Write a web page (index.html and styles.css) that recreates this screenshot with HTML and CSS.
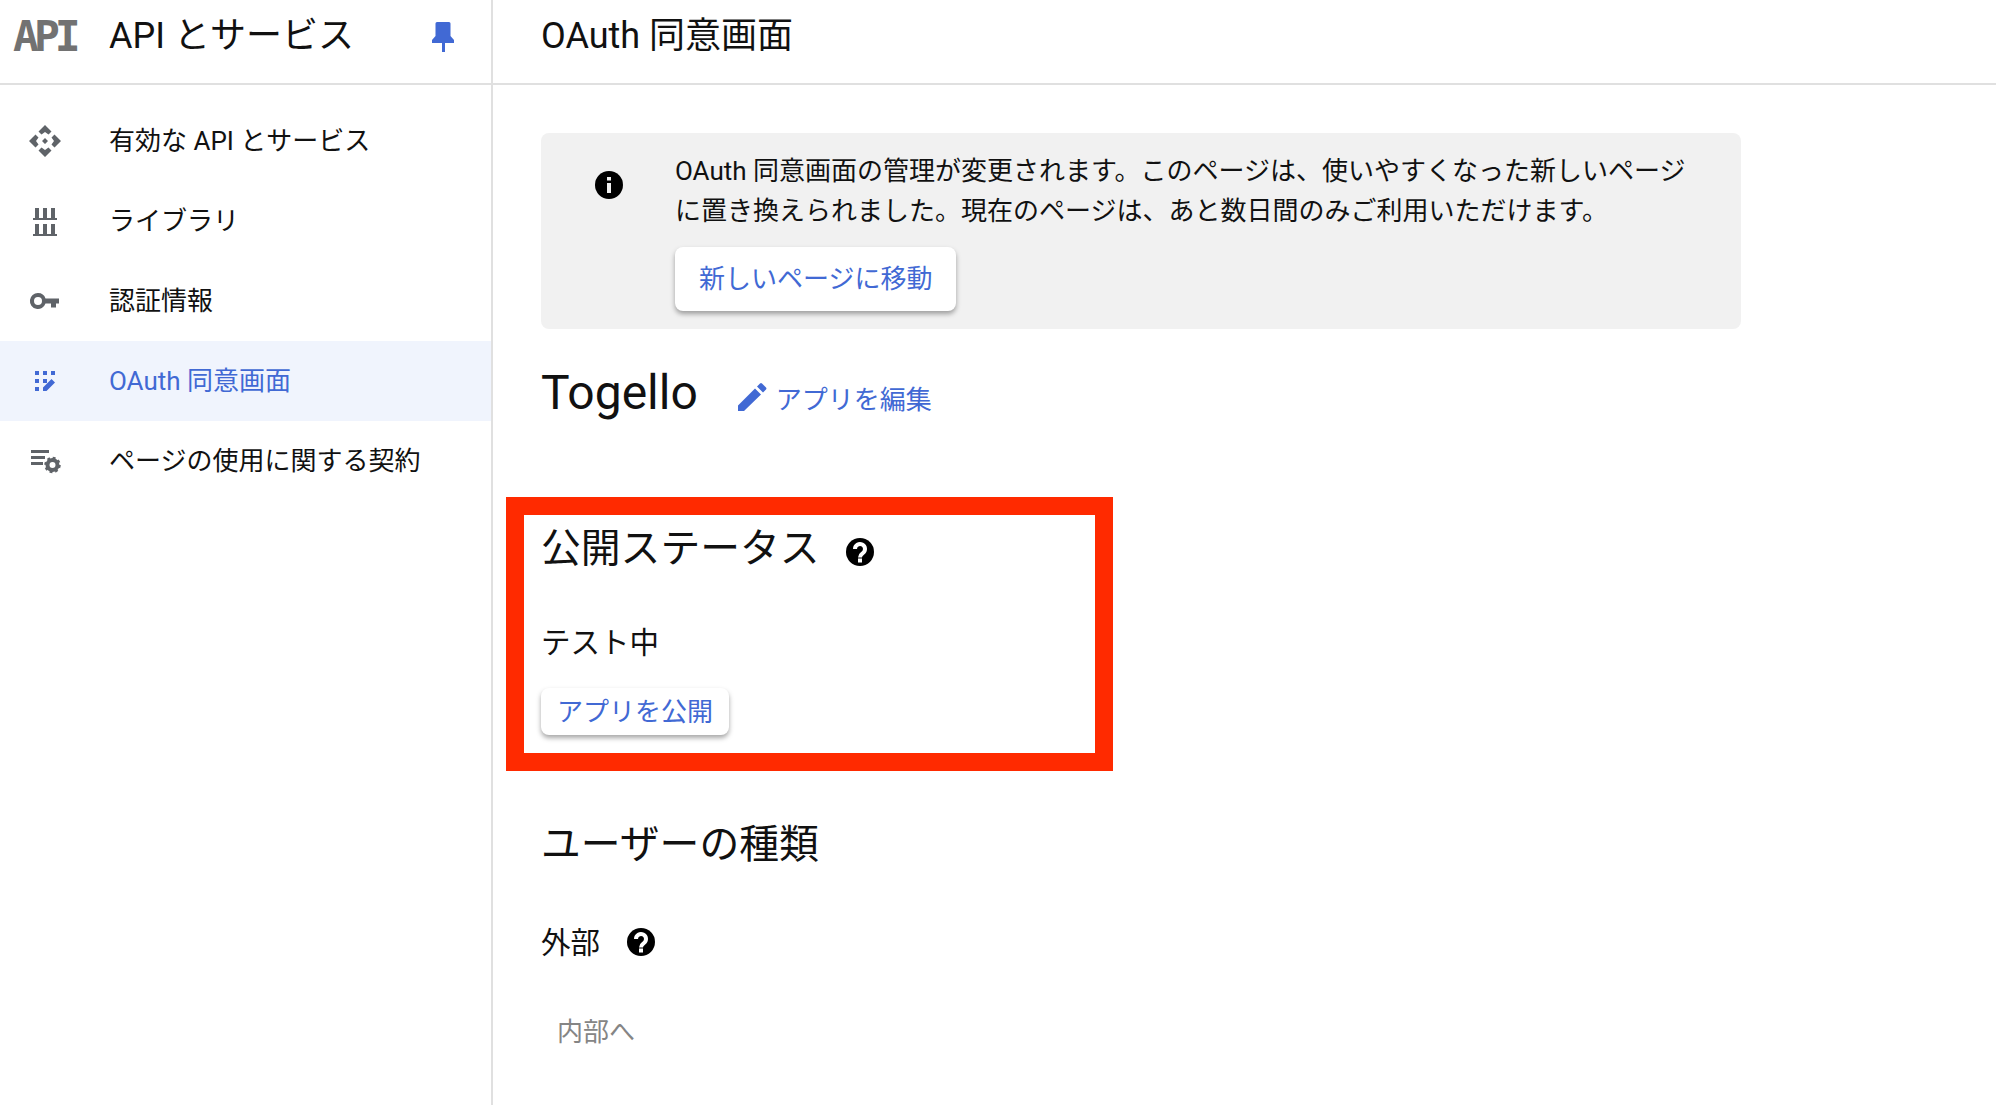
FILE: index.html
```html
<!DOCTYPE html>
<html lang="ja">
    <head>
        <meta charset="UTF-8" />
        <title>OAuth 同意画面</title>
        <link rel="stylesheet" href="styles.css">
    </head>
    <body>
        <div class="page">
            <aside class="sidebar">
                <div class="side-head">
                    <span class="api-logo">API</span>
                    <span class="side-title">API とサービス</span>
                    <svg class="pin" viewBox="0 0 22 30"><path d="M5 0h12q1.500 0 1.500 1.500V14l3.500 4v3h-9v9h-3v-9H0v-3l3.500-4V1.500Q3.500 0 5 0z"/></svg>
                </div>
                <nav class="nav">
                    <a class="nav-item">
                        <svg class="nav-icon" viewBox="0 0 32 32"><path d="M16 0l6.500 6.500-3 3L16 7l-3.500 2.500-3-3zM32 16l-6.500 6.500-3-3L25 16l-2.500-3.500 3-3zM16 32l-6.500-6.500 3-3L16 25l3.500-2.500 3 3zM0 16l6.500-6.500 3 3L7 16l2.500 3.500-3 3zM16 13l3 3-3 3-3-3z"/></svg>
                        <span class="nav-label">有効な API とサービス</span>
                    </a>
                    <a class="nav-item">
                        <svg class="nav-icon" viewBox="0 0 32 32"><path d="M6 3h4v10H6zM14 3h4v10h-4zM22 3h4v10h-4zM4 13h24v2H4zM6 19h4v10H6zM14 19h4v10h-4zM22 19h4v10h-4zM4 29h24v2H4z"/></svg>
                        <span class="nav-label">ライブラリ</span>
                    </a>
                    <a class="nav-item">
                        <svg class="nav-icon" viewBox="0 0 32 32"><path fill-rule="evenodd" d="M9 8a8 8 0 0 1 7.500 5.500H30v5h-3v4h-5v-4h-5.500A8 8 0 1 1 9 8zm0 4a4 4 0 1 0 0 8 4 4 0 0 0 0-8z"/></svg>
                        <span class="nav-label">認証情報</span>
                    </a>
                    <a class="nav-item active">
                        <svg class="nav-icon" viewBox="0 0 32 32"><path d="M6 6h4v4H6zM14 6h4v4h-4zM22 6h4v4h-4zM6 14h4v4H6zM14 14h4v4h-4zM6 22h4v4H6zM14 26v-3.500L22.500 14l3.500 3.500-8.500 8.500z"/></svg>
                        <span class="nav-label">OAuth 同意画面</span>
                    </a>
                    <a class="nav-item">
                        <svg class="nav-icon" viewBox="0 0 32 32">
                            <path d="M2 5h18v3H2zM2 11h14v3H2zM2 17h12v3H2z"/>
                            <circle class="gear" cx="23.500" cy="20" r="5" stroke-width="4"/>
                            <circle class="gear" cx="23.500" cy="20" r="7" stroke-width="2.500" stroke-dasharray="2.750 2.750"/>
                        </svg>
                        <span class="nav-label">ページの使用に関する契約</span>
                    </a>
                </nav>
            </aside>
            <div class="content">
                <header class="content-head">OAuth 同意画面</header>
                <main class="main">
                    <section class="banner">
                        <svg class="round-icon banner-icon" viewBox="0 0 28 28"><circle cx="14" cy="14" r="14"/><path fill="#f1f1f1" d="M12 6h4v3.500h-4zM12 12h4v10h-4z"/></svg>
                        <div class="banner-body">
                            <p class="banner-text">OAuth 同意画面の管理が変更されます。このページは、使いやすくなった新しいページに置き換えられました。現在のページは、あと数日間のみご利用いただけます。</p>
                            <button class="btn btn-big">新しいページに移動</button>
                        </div>
                    </section>

                    <div class="app-row">
                        <h1 class="app-name">Togello</h1>
                        <a class="edit-link">
                            <svg class="pencil" viewBox="0 0 29 28"><path d="M0 22.500L17 5.500l6 6L6 28H0zM19 3.500l3-3a1.500 1.500 0 0 1 2 0l4 4a1.500 1.500 0 0 1 0 2l-3 3z"/></svg>
                            アプリを編集
                        </a>
                    </div>

                    <section class="status">
                        <h2 class="section-title">公開ステータス
                            <svg class="round-icon help" viewBox="0 0 28 28"><circle cx="14" cy="14" r="14"/><path fill="none" stroke="#fff" stroke-width="4" d="M9 11a5 5 0 1 1 8 4c-2 1.500-3 2-3 4.500"/><rect x="12" y="20.500" width="4" height="4" fill="#fff"/></svg>
                        </h2>
                        <p class="value">テスト中</p>
                        <button class="btn">アプリを公開</button>
                    </section>

                    <section class="user-type">
                        <h2 class="section-title">ユーザーの種類</h2>
                        <p class="value">外部
                            <svg class="round-icon help" viewBox="0 0 28 28"><circle cx="14" cy="14" r="14"/><path fill="none" stroke="#fff" stroke-width="4" d="M9 11a5 5 0 1 1 8 4c-2 1.500-3 2-3 4.500"/><rect x="12" y="20.500" width="4" height="4" fill="#fff"/></svg>
                        </p>
                        <span class="disabled-link">内部へ</span>
                    </section>
                </main>
                <!-- annotation drawn over the screenshot -->
                <div class="highlight"></div>
            </div>
        </div>
    </body>
</html>
```

FILE: styles.css
```css
:root {
    --blue: #4169d4;
    --line: #e0e0e0;
    --icon: #5f6368;
}

html,
body {
    margin: 0;
    height: 100%;
    overflow: hidden;
}

body {
    font-family: Roboto, "Noto Sans CJK JP", sans-serif;
    font-size: 26px;
    color: #111;
    background: #fff;
}

p,
h1,
h2 {
    margin: 0;
    font-weight: 400;
}

.page {
    display: grid;
    grid-template-columns: 493px 1fr;
    height: 1105px;
}

/* Sidebar */
.sidebar {
    border-right: 2px solid var(--line);
}

.side-head {
    display: flex;
    align-items: center;
    height: 63px;
    padding: 0 0 20px 13px;
    border-bottom: 2px solid var(--line);
}

.api-logo {
    width: 96px;
    margin-top: 8px;
    font-family: "DejaVu Sans Mono", monospace;
    font-weight: 700;
    font-size: 43px;
    letter-spacing: -5px;
    color: #727272;
}

.side-title {
    font-size: 36px;
}

.pin {
    width: 22px;
    height: 30px;
    margin: 10px 37px 0 auto;
    fill: var(--blue);
}

.nav {
    padding-top: 16px;
}

.nav-item {
    display: flex;
    align-items: center;
    height: 80px;
}

.nav-icon {
    width: 32px;
    height: 32px;
    margin: 0 48px 0 29px;
    fill: var(--icon);
}

.gear {
    fill: none;
    stroke: var(--icon);
}

.nav-label {
    margin-bottom: 5px;
}

.nav-item.active {
    background: #f0f4fd;
    color: var(--blue);
}

.nav-item.active .nav-icon {
    fill: var(--blue);
}

/* Main */
.content {
    position: relative;
}

.content-head {
    display: flex;
    align-items: center;
    height: 63px;
    padding: 0 0 20px 48px;
    border-bottom: 2px solid var(--line);
    font-size: 36px;
}

.main {
    padding: 48px 0 0 48px;
}

.banner {
    display: flex;
    width: 1200px;
    height: 196px;
    background: #f1f1f1;
    border-radius: 8px;
}

.round-icon {
    width: 28px;
    height: 28px;
    flex: none;
}

.banner-icon {
    margin: 38px 52px 0 54px;
}

.banner-body {
    padding-top: 18px;
}

.banner-text {
    width: 1020px;
    line-height: 40px;
}

.btn {
    display: block;
    font: inherit;
    color: var(--blue);
    background: #fff;
    border: 0;
    border-radius: 8px;
    height: 47px;
    padding: 0 16px 4px;
    box-shadow: 0 3px 5px rgba(0, 0, 0, 0.35);
}

.btn-big {
    height: 64px;
    padding: 0 24px 5px;
    margin-top: 16px;
}

.app-row {
    display: flex;
    align-items: center;
    margin-top: 31px;
    height: 64px;
}

.app-name {
    font-size: 48px;
    margin-right: 40px;
}

.edit-link {
    display: flex;
    align-items: center;
    color: var(--blue);
    margin-top: 10px;
}

.pencil {
    width: 29px;
    height: 28px;
    margin-right: 9px;
    fill: var(--blue);
}

.status {
    margin-top: 90px;
}

.section-title {
    display: flex;
    align-items: center;
    font-size: 39.8px;
    height: 60px;
}

.section-title .help {
    margin-left: 26px;
    margin-top: 15px;
}

.value {
    display: flex;
    align-items: center;
    font-size: 29.5px;
    height: 44px;
    margin-top: 44px;
}

.value .help {
    margin-left: 27px;
    margin-top: 4px;
}

.status .btn {
    margin-top: 26px;
}

.user-type {
    margin-top: 75px;
}

.user-type .value {
    margin-top: 48px;
}

.disabled-link {
    display: block;
    margin: 49px 0 0 16px;
    color: #858585;
}

.highlight {
    position: absolute;
    left: 13px;
    top: 497px;
    width: 571px;
    height: 238px;
    border: 18px solid #ff2a00;
}
```
